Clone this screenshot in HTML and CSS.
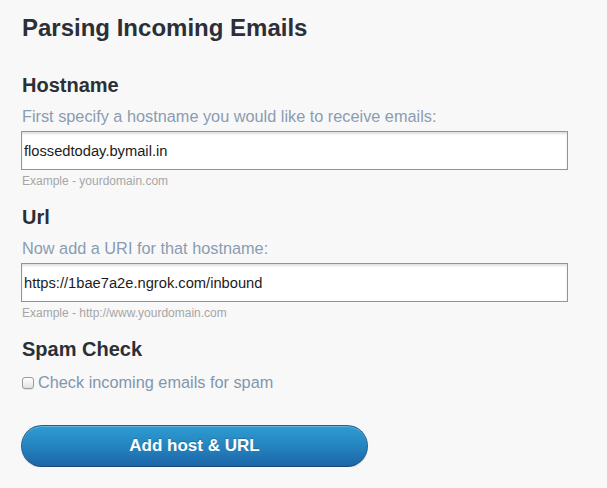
FILE: index.html
```html
<!DOCTYPE html>
<html>
<head>
<meta charset="utf-8">
<link rel="stylesheet" href="styles.css">
</head>
<body>
<div class="page">
  <h1 class="title">Parsing Incoming Emails</h1>

  <h2 class="section">Hostname</h2>
  <p class="hint">First specify a hostname you would like to receive emails:</p>
  <input class="field" type="text" value="flossedtoday.bymail.in">
  <p class="example">Example - yourdomain.com</p>

  <h2 class="section">Url</h2>
  <p class="hint">Now add a URI for that hostname:</p>
  <input class="field" type="text" value="https://1bae7a2e.ngrok.com/inbound">
  <p class="example">Example - http://www.yourdomain.com</p>

  <h2 class="section">Spam Check</h2>
  <label class="check-row"><input class="check" type="checkbox"><span>Check incoming emails for spam</span></label>

  <button class="btn" type="button">Add host &amp; URL</button>
</div>
</body>
</html>
```

FILE: styles.css
```css
html, body {
  margin: 0;
  padding: 0;
  background: #f8f8f8;
}
body {
  font-family: "Liberation Sans", Arial, Helvetica, sans-serif;
  color: #2b2f36;
}
.page {
  display: flex;
  flex-direction: column;
  align-items: flex-start;
  padding: 14px 0 0 21px;
}
.title {
  margin: 0 0 0 1px;
  font-size: 24px;
  line-height: 28px;
  font-weight: bold;
  color: #2b2f36;
}
.section {
  margin: 17px 0 0 1px;
  font-size: 20px;
  line-height: 24px;
  font-weight: bold;
  color: #2b2f36;
}
.title + .section {
  margin-top: 31px;
}
.hint {
  margin: 10px 0 0 1px;
  font-size: 16.3px;
  line-height: 19px;
  color: #8a9cb2;
}
.field {
  box-sizing: border-box;
  width: 547px;
  height: 39px;
  margin: 5px 0 0 0;
  padding: 0 2px;
  border: 1px solid #8795ab;
  border-radius: 0;
  background: #fff;
  box-shadow: inset 0 2px 2px rgba(0,0,0,0.12);
  font-family: "Liberation Sans", Arial, Helvetica, sans-serif;
  font-size: 14.7px;
  color: #1c1c1c;
  outline: none;
}
.example {
  margin: 4px 0 0 1px;
  font-size: 12px;
  line-height: 14px;
  color: #a6a6a6;
}
.check-row {
  display: flex;
  align-items: center;
  margin: 12px 0 0 1px;
  font-size: 16.3px;
  line-height: 18px;
  color: #8296ad;
}
.check {
  -webkit-appearance: none;
  appearance: none;
  box-sizing: border-box;
  width: 12px;
  height: 12px;
  margin: 2px 4px 0 0;
  border: 1px solid #9a9a9a;
  border-radius: 3px;
  background: linear-gradient(#ffffff, #e2e2e2);
  box-shadow: 0 1px 1px rgba(0,0,0,0.08);
}
.btn {
  box-sizing: border-box;
  width: 347px;
  height: 42px;
  margin: 34px 0 0 0;
  border: 1px solid #1f5f95;
  border-bottom-color: #174a78;
  border-radius: 21px;
  background: linear-gradient(#2e9cd2, #2481bd 55%, #1c65a8);
  box-shadow: inset 0 1px 0 rgba(255,255,255,0.25), 0 1px 1px rgba(0,0,0,0.15);
  color: #fff;
  font-family: "Liberation Sans", Arial, Helvetica, sans-serif;
  font-size: 17px;
  font-weight: bold;
  text-shadow: 0 -1px 0 rgba(0,0,0,0.2);
  padding: 0;
}
```
